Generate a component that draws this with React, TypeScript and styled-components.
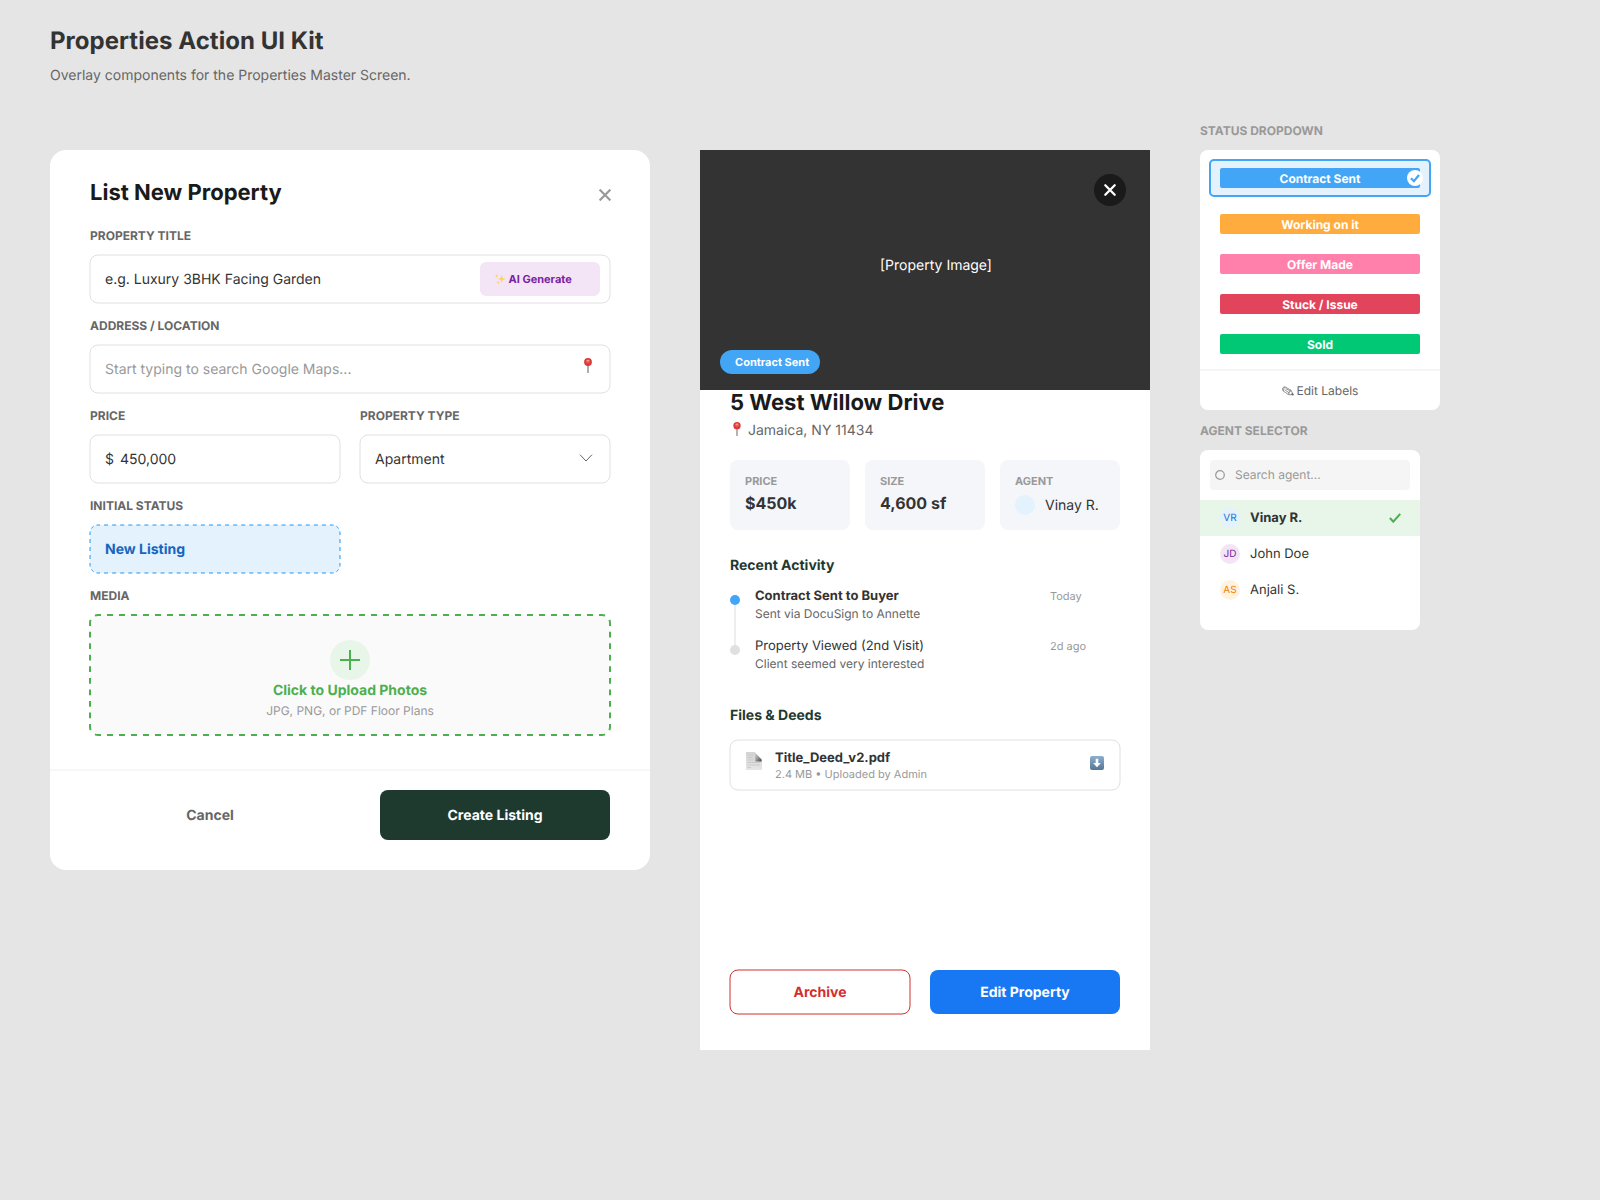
import React from 'react';
import styled, { createGlobalStyle, css } from 'styled-components';

const GlobalStyle = createGlobalStyle`
  *, *::before, *::after { box-sizing: border-box; }
  body {
    margin: 0;
    background: #e5e5e5;
    font-family: Inter, "Liberation Sans", sans-serif;
    text-rendering: geometricPrecision;
    color: #333;
  }
  h1, h2, h3, p { margin: 0; }
  button { font-family: inherit; border: 0; padding: 0; background: none; text-rendering: inherit; }
  svg { display: block; flex: none; }
`;

/* Hairline centred on the box edge, half inside and half outside. */
const centredBorder = css<{ $line?: string }>`
  position: relative;
  &::before {
    content: '';
    position: absolute;
    inset: -1px 0 0 -1px;
    border: 1px solid ${(p) => p.$line ?? '#e0e0e0'};
    border-radius: 8.5px;
    transform: translate(0.5px, 0.5px);
    pointer-events: none;
  }
`;

const Page = styled.main`
  width: 1600px;
  height: 1200px;
  padding: 26px 50px 0;
  overflow: hidden;
`;

const PageHeader = styled.header`
  height: 95px;
`;

const PageTitle = styled.h1`
  font-size: 24px;
  line-height: 30px;
  font-weight: 700;
  letter-spacing: 0.04px;
  color: #333;
`;

const PageSubtitle = styled.p`
  margin-top: 10px;
  font-size: 14px;
  line-height: 20px;
  color: #666;
`;

const Board = styled.div`
  display: flex;
  align-items: flex-start;
  gap: 50px;
`;

/* ---------- shared pieces ---------- */

const Button = styled.button<{ $w: number; $h: number; $bg?: string; $fg: string }>`
  width: ${(p) => p.$w}px;
  height: ${(p) => p.$h}px;
  padding-top: 2px;
  border-radius: 8px;
  background: ${(p) => p.$bg ?? 'transparent'};
  color: ${(p) => p.$fg};
  font-size: 14px;
  line-height: 20px;
  font-weight: 700;
`;

const OutlineButton = styled(Button)<{ $line?: string }>`
  ${centredBorder}
`;

const Avatar = styled.span<{ $bg: string; $fg?: string }>`
  width: 20px;
  height: 20px;
  border-radius: 50%;
  background: ${(p) => p.$bg};
  color: ${(p) => p.$fg};
  font-size: 10px;
  line-height: 21px;
  text-align: center;
`;

/* ---------- new property form ---------- */

const Modal = styled.section`
  width: 600px;
  height: 720px;
  margin-top: 29px;
  border-radius: 16px;
  background: #fff;
  display: flex;
  flex-direction: column;
`;

const ModalBody = styled.div`
  height: 619px;
  padding: 27px 40px 0;
`;

const ModalHeader = styled.div`
  display: flex;
  justify-content: space-between;
  height: 51px;
`;

const ModalTitle = styled.h2`
  padding-top: 1px;
  font-size: 22px;
  line-height: 30px;
  font-weight: 700;
  color: #1a1a1a;
`;

const CloseGlyph = styled.svg`
  margin: 12px -1px 0 0;
`;

const Fields = styled.div`
  display: grid;
  grid-template-columns: 250px 250px;
  gap: 15px 20px;
`;

const Field = styled.div<{ $wide?: boolean }>`
  grid-column: ${(p) => (p.$wide ? '1 / -1' : 'auto')};
`;

const FieldLabel = styled.div`
  margin-bottom: 12px;
  font-size: 12px;
  line-height: 15px;
  font-weight: 700;
  color: #666;
`;

const Input = styled.div<{ $placeholder?: boolean; $line?: string }>`
  ${centredBorder}
  display: flex;
  align-items: center;
  justify-content: space-between;
  height: 48px;
  padding: 2px 10px 0 15px;
  border-radius: 8px;
  background: #fff;
  font-size: 14px;
  line-height: 20px;
  white-space: pre;
  color: ${(p) => (p.$placeholder ? '#999' : '#333')};
`;

const Amount = styled.span`
  flex: 1;
  margin-left: 6px;
`;

const AiButton = styled.button`
  display: flex;
  align-items: center;
  gap: 2.5px;
  width: 120px;
  height: 34px;
  margin-bottom: 2px;
  padding-left: 15px;
  border-radius: 6px;
  background: #f3e5f5;
  color: #7b1fa2;
  font-size: 11px;
  line-height: 16px;
  font-weight: 700;
`;

const InputPin = styled.svg`
  margin: 0 8px 10px 0;
`;

const Chevron = styled.svg`
  margin: 0 7px 4px 0;
`;

const StatusBox = styled.div`
  position: relative;
  display: flex;
  align-items: center;
  width: 250px;
  height: 48px;
  padding: 2px 0 0 15px;
  border-radius: 8px;
  background: #e3f2fd;
  color: #1565c0;
  font-size: 14px;
  line-height: 20px;
  font-weight: 700;
`;

const UploadBox = styled.div`
  position: relative;
  display: flex;
  flex-direction: column;
  align-items: center;
  height: 120px;
  padding-top: 25px;
  border-radius: 8px;
  background: #fafafa;
`;

const UploadTitle = styled.div`
  margin-top: 1px;
  font-size: 14px;
  line-height: 20px;
  font-weight: 700;
  color: #4caf50;
`;

const UploadHint = styled.div`
  font-size: 12px;
  line-height: 19px;
  color: #999;
`;

const Outline = styled.svg`
  position: absolute;
  inset: 0;
  overflow: visible;
`;

const ModalFooter = styled.div`
  display: flex;
  border-top: 2px solid #f7f7f7;
  padding: 19px 40px 0 50px;
  gap: 60px;
`;

/* ---------- property details ---------- */

const Details = styled.section`
  width: 450px;
  height: 900px;
  margin-top: 29px;
  background: #fff;
`;

const Hero = styled.div`
  position: relative;
  display: flex;
  align-items: center;
  justify-content: center;
  height: 240px;
  padding: 0 0 9px 22px;
  background: #333;
  color: #fff;
  font-size: 14px;
  line-height: 20px;
`;

const HeroClose = styled.svg`
  position: absolute;
  top: 24px;
  right: 24px;
`;

const HeroBadge = styled.span`
  position: absolute;
  left: 20px;
  bottom: 16px;
  width: 100px;
  height: 24px;
  padding-left: 15px;
  border-radius: 12px;
  background: #42a5f5;
  color: #fff;
  font-size: 11px;
  line-height: 24px;
  font-weight: 700;
  white-space: nowrap;
`;

const DetailsBody = styled.div`
  padding: 0 30px;
`;

const PropertyName = styled.h2`
  height: 30px;
  font-size: 22px;
  line-height: 26px;
  font-weight: 700;
  color: #1a1a1a;
`;

const Address = styled.p`
  display: flex;
  align-items: center;
  gap: 7px;
  height: 20px;
  padding: 2px 0 0 3px;
  font-size: 14px;
  line-height: 20px;
  color: #666;
`;

const AddressPin = styled.svg`
  margin-bottom: 5px;
`;

const Stats = styled.div`
  display: grid;
  grid-template-columns: repeat(3, 120px);
  gap: 15px;
  margin-top: 20px;
`;

const Stat = styled.div`
  height: 70px;
  padding: 13px 15px 0;
  border-radius: 8px;
  background: #f5f6fa;
`;

const StatLabel = styled.div`
  font-size: 11px;
  line-height: 16px;
  font-weight: 700;
  color: #999;
`;

const StatValue = styled.div`
  margin-top: 4px;
  font-size: 16px;
  line-height: 20px;
  font-weight: 700;
`;

const StatAgent = styled.div`
  display: flex;
  align-items: center;
  gap: 10px;
  height: 20px;
  margin-top: 6px;
`;

const StatAgentName = styled.span`
  padding-top: 2px;
  font-size: 14px;
  line-height: 20px;
  white-space: nowrap;
`;

const SectionTitle = styled.h3<{ $top: number }>`
  margin-top: ${(p) => p.$top}px;
  font-size: 14px;
  line-height: 20px;
  font-weight: 700;
  color: #1e3a2f;
`;

const Timeline = styled.div`
  display: grid;
  grid-template-columns: 10px 275px auto;
  column-gap: 15px;
  margin-top: 10px;
`;

const Rail = styled.svg`
  grid-row: 1 / 3;
  margin-top: 9px;
`;

const Event = styled.div`
  height: 50px;
  margin-right: 10px;
`;

const EventName = styled.div<{ $strong?: boolean }>`
  height: 18px;
  padding-top: 1px;
  font-size: 13px;
  line-height: 18px;
  font-weight: ${(p) => (p.$strong ? 700 : 400)};
`;

const EventNote = styled.div`
  font-size: 12px;
  line-height: 19px;
  color: #666;
`;

const EventTime = styled.div`
  margin-left: 5px;
  font-size: 11px;
  line-height: 20px;
  color: #999;
`;

const FileCard = styled.div<{ $line?: string }>`
  ${centredBorder}
  display: flex;
  align-items: center;
  height: 50px;
  margin-top: 14px;
  padding: 0 16px;
`;

const FileText = styled.div`
  flex: 1;
  margin-left: 13px;
`;

const FileName = styled.div`
  height: 17px;
  padding-top: 1px;
  font-size: 13px;
  line-height: 17px;
  font-weight: 700;
`;

const FileMeta = styled.div`
  font-size: 11px;
  line-height: 16px;
  color: #999;
`;

const DownloadIcon = styled.svg`
  margin-bottom: 4px;
`;

const DocIcon = styled.svg`
  margin-bottom: 8px;
`;

const DetailsActions = styled.div`
  display: flex;
  gap: 20px;
  margin-top: 180px;
`;

/* ---------- dropdowns ---------- */

const Side = styled.aside`
  display: flex;
  flex-direction: column;
  align-items: flex-start;
`;

const SideLabel = styled.div`
  height: 29px;
  padding-top: 2px;
  font-size: 12px;
  line-height: 15px;
  font-weight: 700;
  color: #999;
`;

const StatusMenu = styled.div`
  width: 240px;
  height: 260px;
  margin-bottom: 11px;
  border-radius: 8px;
  background: #fff;
  padding-top: 9px;
`;

const StatusOption = styled.div<{ $active?: boolean }>`
  position: relative;
  display: flex;
  align-items: center;
  justify-content: center;
  width: 222px;
  height: ${(p) => (p.$active ? 38 : 40)}px;
  margin: 0 auto ${(p) => (p.$active ? 7 : 0)}px;
  border: ${(p) => (p.$active ? '2px solid #42a5f5' : '0')};
  border-radius: 5px;
  background: ${(p) => (p.$active ? '#e3f2fd' : 'none')};
`;

const StatusBar = styled.div<{ $color: string }>`
  width: 200px;
  height: 20px;
  border-radius: 2px;
  background: ${(p) => p.$color};
  color: #fff;
  font-size: 12px;
  line-height: 22px;
  font-weight: 700;
  text-align: center;
`;

const StatusTick = styled.svg`
  position: absolute;
  top: 9px;
  right: 6px;
`;

const EditLabels = styled.div`
  display: flex;
  align-items: center;
  justify-content: center;
  gap: 3px;
  height: 41px;
  margin-top: 5px;
  border-top: 2px solid #f5f5f5;
  padding-top: 1px;
  font-size: 12px;
  line-height: 16px;
  color: #666;
`;

const AgentMenu = styled.div`
  width: 220px;
  height: 180px;
  padding-top: 10px;
  border-radius: 8px;
  background: #fff;
`;

const AgentSearch = styled.div`
  display: flex;
  align-items: center;
  gap: 10px;
  width: 200px;
  height: 30px;
  margin: 0 10px 10px;
  padding: 0 0 1px 5px;
  border-radius: 4px;
  background: #f5f5f5;
  font-size: 12px;
  line-height: 16px;
  color: #999;
`;

const AgentRow = styled.div<{ $active?: boolean }>`
  display: flex;
  align-items: center;
  gap: 10px;
  height: 36px;
  padding: 0 19px 0 20px;
  background: ${(p) => (p.$active ? '#e8f5e9' : 'none')};
`;

const AgentName = styled.span<{ $active?: boolean }>`
  flex: 1;
  font-size: 13px;
  line-height: 18px;
  font-weight: ${(p) => (p.$active ? 700 : 400)};
`;

/* ---------- drawings ---------- */

type DashProps = { w: number; h: number; r: number; dash: number; width: number; color: string };

/* Every side and corner carries a whole number of dash periods, with half a dash at each end. */
function DashedOutline({ w, h, r, dash, width, color }: DashProps) {
  const period = dash * 2;
  const arc = (Math.PI * r) / 2;
  const parts: [string, number][] = [
    [`M${r} 0H${w - r}`, w - 2 * r],
    [`M${w - r} 0A${r} ${r} 0 0 1 ${w} ${r}`, arc],
    [`M${w} ${r}V${h - r}`, h - 2 * r],
    [`M${w} ${h - r}A${r} ${r} 0 0 1 ${w - r} ${h}`, arc],
    [`M${w - r} ${h}H${r}`, w - 2 * r],
    [`M${r} ${h}A${r} ${r} 0 0 1 0 ${h - r}`, arc],
    [`M0 ${h - r}V${r}`, h - 2 * r],
    [`M0 ${r}A${r} ${r} 0 0 1 ${r} 0`, arc],
  ];
  return (
    <Outline width={w} height={h} fill="none" stroke={color} strokeWidth={width}>
      {parts.map(([d, len]) => (
        <path
          key={d}
          d={d}
          pathLength={Math.max(1, Math.round(len / period)) * period}
          strokeDasharray={`${dash} ${dash}`}
          strokeDashoffset={dash / 2}
        />
      ))}
    </Outline>
  );
}

const PinArt = () => (
  <>
    <path d="M4 6v8.4" stroke="#85807e" strokeWidth="1.3" strokeLinecap="round" />
    <circle cx="4" cy="4" r="3.9" fill="#d8383c" />
    <circle cx="4" cy="3.6" r="2.2" fill="#ec5348" />
    <ellipse cx="3.9" cy="2.6" rx="1.5" ry="0.9" fill="#ff9a80" />
  </>
);

const Sparkles = () => (
  <svg width="11" height="11" viewBox="0 0 11 11" fill="#fcd35c">
    <path d="M6.7 1 7.7 4 10.8 5 7.7 6 6.7 9 5.7 6 2.8 5 5.7 4Z" />
    <path d="M1.7.2 2.2 1.6 3.5 2.1 2.2 2.6 1.7 4 1.2 2.6 0 2.1 1.2 1.6Z" />
    <path d="M3.2 6.8 3.7 8.1 5 8.6 3.7 9.1 3.2 10.5 2.7 9.1 1.5 8.6 2.7 8.1Z" />
  </svg>
);

const Tick = ({ color }: { color: string }) => (
  <svg width="12" height="10" viewBox="0 0 12 10" fill="none" stroke={color} strokeWidth="2.1">
    <path d="M.9 5 4.3 8.6 11.2.9" />
  </svg>
);

const statuses = [
  ['Working on it', '#ffab3d'],
  ['Offer Made', '#ff80ab'],
  ['Stuck / Issue', '#e2445c'],
  ['Sold', '#00c875'],
];

const agents = [
  { initials: 'VR', name: 'Vinay R.', bg: '#e3f2fd', fg: '#1976d2', active: true },
  { initials: 'JD', name: 'John Doe', bg: '#f3e5f5', fg: '#7b1fa2' },
  { initials: 'AS', name: 'Anjali S.', bg: '#fff3e0', fg: '#f57c00' },
];

function ListPropertyModal() {
  return (
    <Modal>
      <ModalBody>
        <ModalHeader>
          <ModalTitle>List New Property</ModalTitle>
          <CloseGlyph width="12" height="12" viewBox="0 0 12 12" stroke="#999" strokeWidth="2.2">
            <path d="M.6.6 11.4 11.4M11.4.6.6 11.4" />
          </CloseGlyph>
        </ModalHeader>
        <Fields>
          <Field $wide>
            <FieldLabel>PROPERTY TITLE</FieldLabel>
            <Input>
              e.g. Luxury 3BHK Facing Garden
              <AiButton>
                <Sparkles />
                AI Generate
              </AiButton>
            </Input>
          </Field>
          <Field $wide>
            <FieldLabel>ADDRESS / LOCATION</FieldLabel>
            <Input $placeholder>
              Start typing to search Google Maps...
              <InputPin width="8" height="15" viewBox="0 0 8 15">
                <PinArt />
              </InputPin>
            </Input>
          </Field>
          <Field>
            <FieldLabel>PRICE</FieldLabel>
            <Input>
              $<Amount>450,000</Amount>
            </Input>
          </Field>
          <Field>
            <FieldLabel>PROPERTY TYPE</FieldLabel>
            <Input>
              Apartment
              <Chevron width="14" height="8" viewBox="0 0 14 8" fill="none" stroke="#666">
                <path d="M1 .7 7 7 13 .7" />
              </Chevron>
            </Input>
          </Field>
          <Field $wide>
            <FieldLabel>INITIAL STATUS</FieldLabel>
            <StatusBox>
              New Listing
              <DashedOutline w={250} h={48} r={8} dash={4} width={1} color="#2196f3" />
            </StatusBox>
          </Field>
          <Field $wide>
            <FieldLabel>MEDIA</FieldLabel>
            <UploadBox>
              <DashedOutline w={520} h={120} r={8} dash={6} width={2} color="#4caf50" />
              <svg width="40" height="40" viewBox="0 0 40 40">
                <circle cx="20" cy="20" r="20" fill="#e8f5e9" />
                <path d="M20 10V30M10 20H30" stroke="#4caf50" strokeWidth="2" />
              </svg>
              <UploadTitle>Click to Upload Photos</UploadTitle>
              <UploadHint>JPG, PNG, or PDF Floor Plans</UploadHint>
            </UploadBox>
          </Field>
        </Fields>
      </ModalBody>
      <ModalFooter>
        <Button $w={220} $h={50} $fg="#666">
          Cancel
        </Button>
        <Button $w={230} $h={50} $bg="#1e3a2f" $fg="#fff">
          Create Listing
        </Button>
      </ModalFooter>
    </Modal>
  );
}

function PropertyDetails() {
  return (
    <Details>
      <Hero>
        [Property Image]
        <HeroClose width="32" height="32" viewBox="0 0 32 32">
          <circle cx="16" cy="16" r="16" fill="#1a1a1a" />
          <path d="M11.3 11.3 20.7 20.7M20.7 11.3 11.3 20.7" stroke="#fff" strokeWidth="2.3" strokeLinecap="round" />
        </HeroClose>
        <HeroBadge>Contract Sent</HeroBadge>
      </Hero>
      <DetailsBody>
        <PropertyName>5 West Willow Drive</PropertyName>
        <Address>
          <AddressPin width="8" height="14" viewBox="0 0 8 15">
            <PinArt />
          </AddressPin>
          Jamaica, NY 11434
        </Address>
        <Stats>
          <Stat>
            <StatLabel>PRICE</StatLabel>
            <StatValue>$450k</StatValue>
          </Stat>
          <Stat>
            <StatLabel>SIZE</StatLabel>
            <StatValue>4,600 sf</StatValue>
          </Stat>
          <Stat>
            <StatLabel>AGENT</StatLabel>
            <StatAgent>
              <Avatar $bg="#e3f2fd" />
              <StatAgentName>Vinay R.</StatAgentName>
            </StatAgent>
          </Stat>
        </Stats>
        <SectionTitle $top={26}>Recent Activity</SectionTitle>
        <Timeline>
          <Rail width="10" height="60" viewBox="0 0 10 60">
            <path d="M5 5V55" stroke="#eee" strokeWidth="2" />
            <circle cx="5" cy="5" r="5" fill="#42a5f5" />
            <circle cx="5" cy="55" r="5" fill="#e0e0e0" />
          </Rail>
          <Event>
            <EventName $strong>Contract Sent to Buyer</EventName>
            <EventNote>Sent via DocuSign to Annette</EventNote>
          </Event>
          <EventTime>Today</EventTime>
          <Event>
            <EventName>Property Viewed (2nd Visit)</EventName>
            <EventNote>Client seemed very interested</EventNote>
          </Event>
          <EventTime>2d ago</EventTime>
        </Timeline>
        <SectionTitle $top={20}>Files &amp; Deeds</SectionTitle>
        <FileCard>
          <DocIcon width="16" height="18" viewBox="0 0 16 18">
            <defs>
              <linearGradient id="fold" x1="0.1" y1="0.3" x2="0.9" y2="1">
                <stop offset="0" stopColor="#d2d2d2" />
                <stop offset="0.5" stopColor="#9a9a9a" />
                <stop offset="1" stopColor="#4a4a4a" />
              </linearGradient>
              <linearGradient id="sheet" x1="0" y1="0" x2="0" y2="1">
                <stop offset="0" stopColor="#d4d4d4" />
                <stop offset="1" stopColor="#e6e6e6" />
              </linearGradient>
            </defs>
            <path d="M0 0H8L16 8.5V18H0Z" fill="url(#sheet)" />
            <path d="M1.5 3H7M1.5 5.5H7M1.5 8H8M1.5 10.5H14M1.5 13H14M1.5 15.5H5" stroke="#c2c2c2" strokeWidth=".7" />
            <path d="M7 .2H8.8L15.6 7.4V9.6H9.2C9.6 6 9 2.5 7 .2Z" fill="url(#fold)" />
          </DocIcon>
          <FileText>
            <FileName>Title_Deed_v2.pdf</FileName>
            <FileMeta>2.4 MB • Uploaded by Admin</FileMeta>
          </FileText>
          <DownloadIcon width="14" height="14" viewBox="0 0 14 14">
            <defs>
              <linearGradient id="key" x1="0" y1="0" x2="0" y2="1">
                <stop offset="0" stopColor="#8db0cf" />
                <stop offset="1" stopColor="#557595" />
              </linearGradient>
            </defs>
            <rect width="14" height="14" rx="2" fill="url(#key)" />
            <path d="M5.7 2.8H8.3V7H10.8L7 11.3 3.2 7H5.7Z" fill="#fff" />
          </DownloadIcon>
        </FileCard>
        <DetailsActions>
          <OutlineButton $w={180} $h={44} $fg="#d32f2f" $line="#d32f2f">
            Archive
          </OutlineButton>
          <Button $w={190} $h={44} $bg="#1877f2" $fg="#fff">
            Edit Property
          </Button>
        </DetailsActions>
      </DetailsBody>
    </Details>
  );
}

function Dropdowns() {
  return (
    <Side>
      <SideLabel>STATUS DROPDOWN</SideLabel>
      <StatusMenu>
        <StatusOption $active>
          <StatusBar $color="#42a5f5">Contract Sent</StatusBar>
          <StatusTick width="16" height="16" viewBox="0 0 16 16">
            <circle cx="8" cy="8" r="8" fill="#fff" />
            <path d="M4 8.3 6.9 11.2 12 5" fill="none" stroke="#42a5f5" strokeWidth="2.2" />
          </StatusTick>
        </StatusOption>
        {statuses.map(([name, color]) => (
          <StatusOption key={name}>
            <StatusBar $color={color}>{name}</StatusBar>
          </StatusOption>
        ))}
        <EditLabels>
          <svg width="12" height="10" viewBox="0 0 12 10" fill="none" stroke="#666" strokeWidth=".7">
            <path d="M.6 3C.5 1.7 1.7.6 3.1.9L9 4.2 11.3 8.9 6.4 8.6 1 4.8ZM1 4.8C1.2 3.4 2 2 3.1.9M2.6 3.7 7.6 7.2M3.6 2.4 8.6 5.4M6.4 8.6C6.8 6.6 7.8 5 9 4.2" />
            <path d="M9.4 8.4 11.3 8.9 10.4 7.1Z" fill="#666" />
          </svg>
          Edit Labels
        </EditLabels>
      </StatusMenu>
      <SideLabel>AGENT SELECTOR</SideLabel>
      <AgentMenu>
        <AgentSearch>
          <svg width="10" height="10" viewBox="0 0 10 10" fill="none" stroke="#999" strokeWidth="1.2">
            <circle cx="5" cy="5" r="4.3" />
          </svg>
          Search agent...
        </AgentSearch>
        {agents.map((a) => (
          <AgentRow key={a.initials} $active={a.active}>
            <Avatar $bg={a.bg} $fg={a.fg}>
              {a.initials}
            </Avatar>
            <AgentName $active={a.active}>{a.name}</AgentName>
            {a.active && <Tick color="#4caf50" />}
          </AgentRow>
        ))}
      </AgentMenu>
    </Side>
  );
}

export default function App() {
  return (
    <>
      <GlobalStyle />
      <Page>
        <PageHeader>
          <PageTitle>Properties Action UI Kit</PageTitle>
          <PageSubtitle>Overlay components for the Properties Master Screen.</PageSubtitle>
        </PageHeader>
        <Board>
          <ListPropertyModal />
          <PropertyDetails />
          <Dropdowns />
        </Board>
      </Page>
    </>
  );
}
